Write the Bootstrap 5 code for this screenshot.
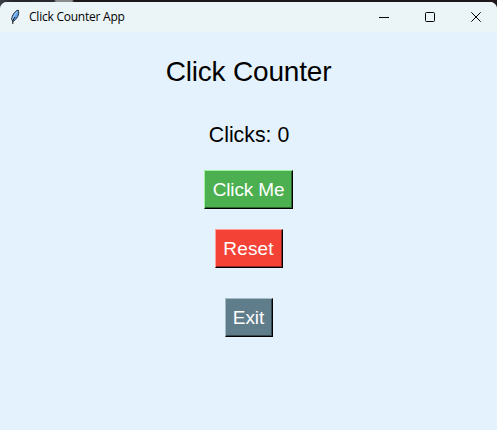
<!DOCTYPE html>
<html lang="en">
<head>
<meta charset="utf-8">
<title>Click Counter App</title>
<link href="https://cdn.jsdelivr.net/npm/bootstrap@5.3.0/dist/css/bootstrap.min.css" rel="stylesheet">
<style>
body { background: linear-gradient(90deg, #3a3f47 0, #24242a 14px, #2a2a30 54px, #8b8b8e 56px, #8b8b8e 72px, #1d171b 74px, #1d171b 100%); font-family: "Liberation Sans", Arial, sans-serif; color: #000; overflow: hidden; }
.app-window { height: 428px; margin-top: 2px; background: #e3f2fd; border-radius: 7px 7px 0 0; overflow: hidden; }
.title-bar { height: 30px; background: #ebf5f8; padding-left: 8px; }
.title-text { font: 12px/16px "Open Sans", "Noto Sans", sans-serif; margin-left: 7px; letter-spacing: -.23px; }
.win-control { width: 46px; height: 28px; padding: 0; border: 0; background: none; }
.win-controls { margin-right: -2px; }
.heading-text { font-size: 28px; line-height: 32px; margin-top: 24px; letter-spacing: -.18px; }
.count-text { font-size: 21.3px; line-height: 24px; margin-top: 35px; padding-left: 1px; }
.tk-btn { height: 39px; padding: 0; font-size: 19px; line-height: 35px; color: #fff; border: 1px solid; border-right-color: #000; border-bottom-color: #000; letter-spacing: -.08px; }
.tk-click { width: 89px; margin-top: 23px; background: #4caf50; border-top-color: #9cf29f; border-left-color: #9cf29f; box-shadow: inset -1px -1px #2b662d; letter-spacing: -.15px; }
.tk-reset { width: 68px; margin-top: 20px; background: #f44336; border-top-color: #ffa19a; border-left-color: #ffa19a; box-shadow: inset -1px -1px #92281f; letter-spacing: .15px; }
.tk-exit { width: 48px; margin-top: 30px; background: #607d8b; border-top-color: #a4bcc6; border-left-color: #a4bcc6; box-shadow: inset -1px -1px #364951; }
</style>
</head>
<body>
<div class="app-window">
  <header class="title-bar d-flex align-items-center">
    <svg width="14" height="18" viewBox="0 0 14 18" aria-hidden="true">
      <path d="M10.2 2C6.8 3.1 3.9 7.3 3.6 11.5L5 13.5C8.8 11.3 11.9 6.6 10.2 2Z" fill="#5ba0ea" stroke="#16202d" stroke-width=".9"/>
      <path d="M9.3 3.8C6.5 6.2 5.3 9 4.7 11.5" fill="none" stroke="#b8daf9" stroke-width="1"/>
      <path d="M7 9L4.8 12.7V16" fill="none" stroke="#111" stroke-width="1"/>
    </svg>
    <span class="title-text text-nowrap">Click Counter App</span>
    <div class="win-controls d-flex ms-auto">
      <button class="win-control d-flex align-items-center justify-content-center" aria-label="Minimize"><svg width="10" height="10"><path d="M0 5.5H10" stroke="#000"/></svg></button>
      <button class="win-control d-flex align-items-center justify-content-center" aria-label="Maximize"><svg width="10" height="10"><rect x=".5" y=".5" width="9" height="9" rx="1" fill="none" stroke="#000"/></svg></button>
      <button class="win-control d-flex align-items-center justify-content-center" aria-label="Close"><svg width="10" height="10"><path d="M.3 .3L9.7 9.7M9.7 .3L.3 9.7" stroke="#000"/></svg></button>
    </div>
  </header>
  <main class="d-flex flex-column align-items-center">
    <h1 class="heading-text fw-normal mb-0">Click Counter</h1>
    <div class="count-text">Clicks: 0</div>
    <button class="btn tk-btn tk-click rounded-0">Click Me</button>
    <button class="btn tk-btn tk-reset rounded-0">Reset</button>
    <button class="btn tk-btn tk-exit rounded-0">Exit</button>
  </main>
</div>
<script src="https://cdn.jsdelivr.net/npm/bootstrap@5.3.0/dist/js/bootstrap.bundle.min.js"></script>
</body>
</html>
